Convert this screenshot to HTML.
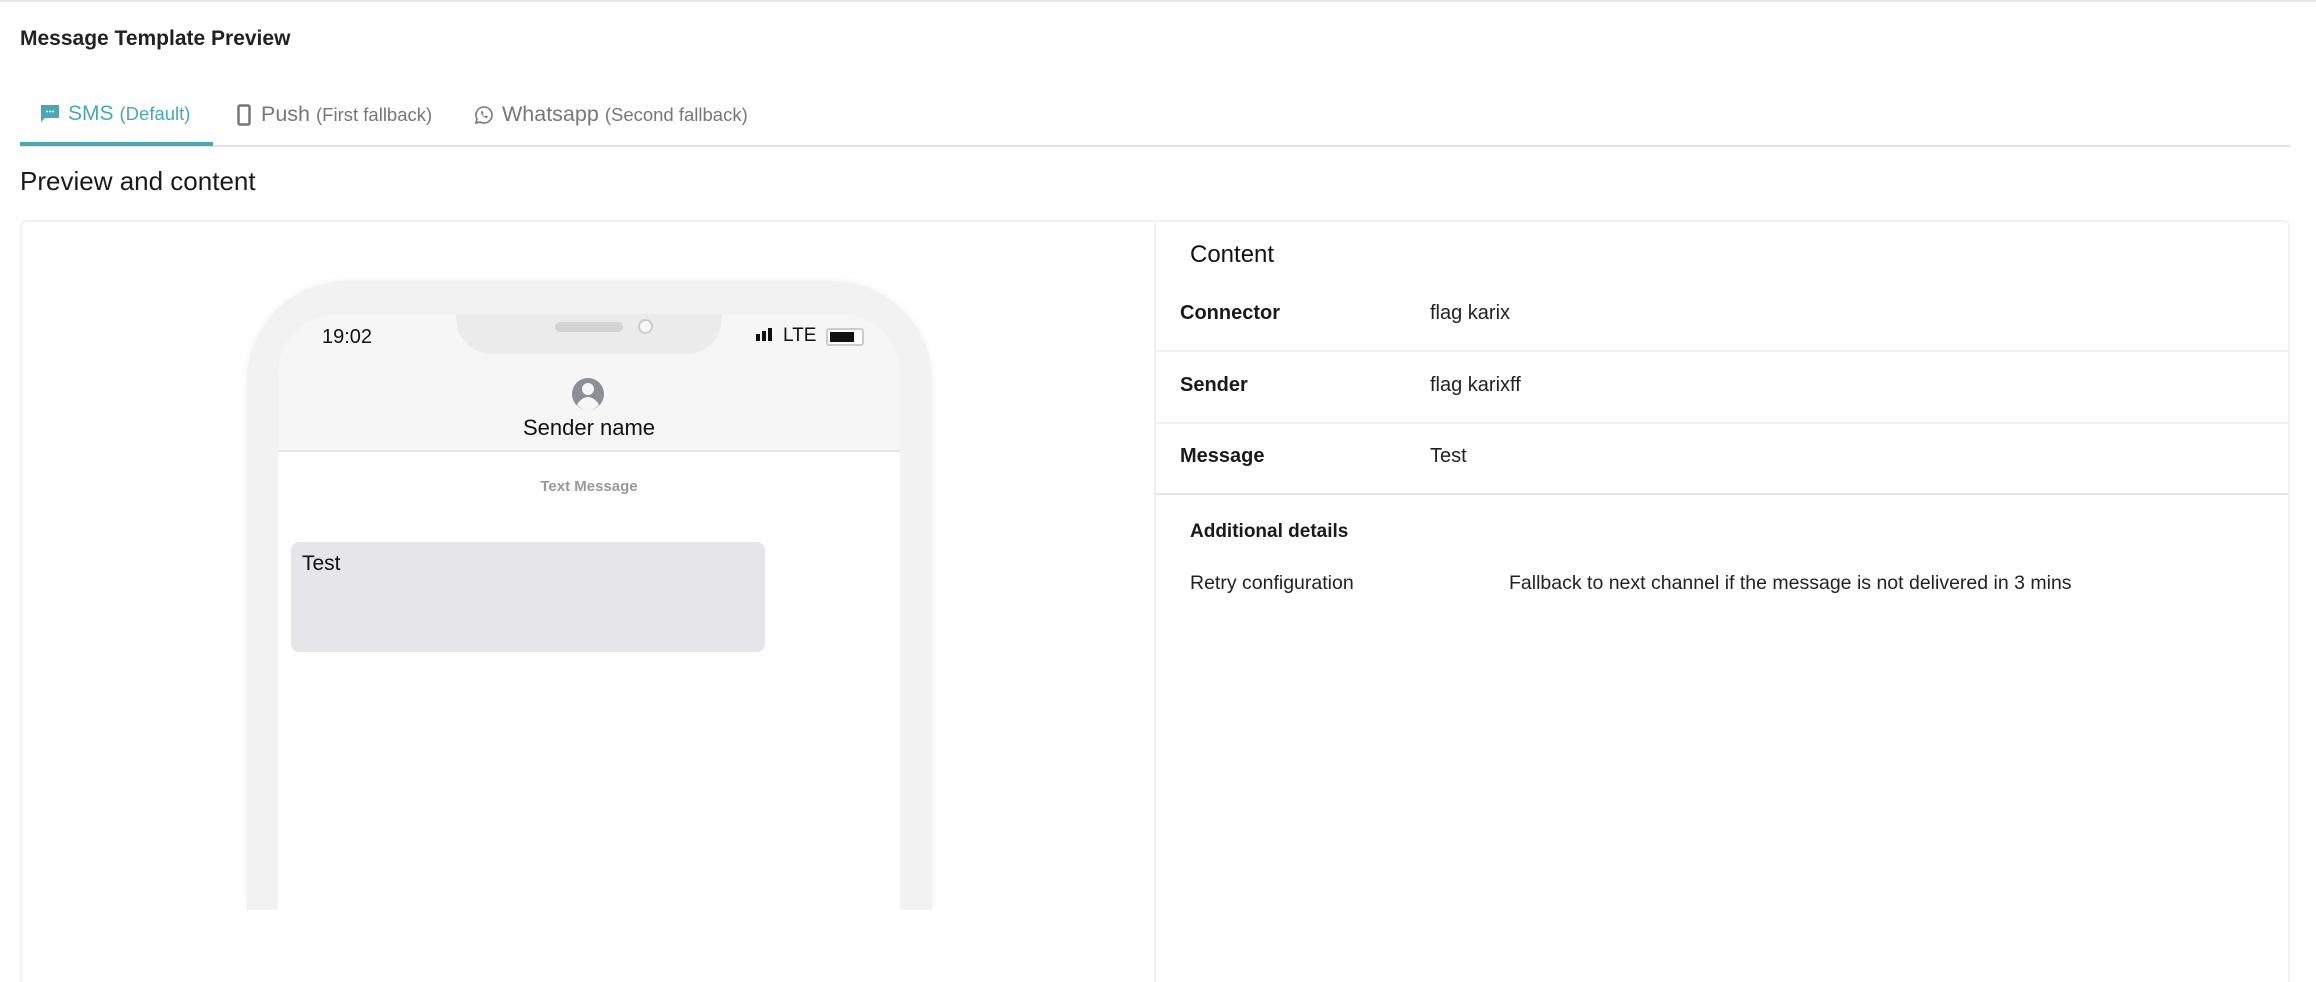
<!DOCTYPE html>
<html style="overflow:hidden;width:2316px;height:982px"><head><meta charset="utf-8"><style>
*{margin:0;padding:0;box-sizing:border-box}
body{width:2316px;height:982px;overflow:hidden;background:#fff;font-family:"Liberation Sans",sans-serif;color:#1a1a1a;position:relative;border-top:2px solid #e4e6f0}
.a{position:absolute;white-space:nowrap}
</style></head><body>
<div class="a" style="left:20px;top:25px;font-size:21px;font-weight:bold;color:#222">Message Template Preview</div>

<div class="a" style="left:40px;top:100px;font-size:21px;color:#4aa7b6;display:flex;align-items:center">
<svg width="20" height="20" viewBox="0 0 20 20" style="margin-right:8px"><path d="M1 1h18v13H5l-4 4z" fill="#4aa7b6"/><circle cx="7" cy="7.5" r="1" fill="#fff"/><circle cx="10" cy="7.5" r="1" fill="#fff"/><circle cx="13" cy="7.5" r="1" fill="#fff"/></svg>SMS <span style="font-size:18.5px;margin-left:6px">(Default)</span></div>
<div class="a" style="left:237px;top:100px;font-size:21.5px;color:#777;display:flex;align-items:center">
<svg width="14" height="22" viewBox="0 0 14 22" style="margin-right:10px"><rect x="1.5" y="1.5" width="11" height="19" rx="1.5" fill="none" stroke="#777" stroke-width="2.5"/></svg>Push <span style="font-size:18.5px;margin-left:6px">(First fallback)</span></div>
<div class="a" style="left:474px;top:100px;font-size:21.5px;color:#777;display:flex;align-items:center">
<svg width="20" height="20" viewBox="0 0 20 20" style="margin-right:8px"><path d="M10 2a8 8 0 0 1 0 16a8 8 0 0 1-4-1l-4 1 1-4a8 8 0 0 1 7-12z" fill="none" stroke="#777" stroke-width="1.6"/><path d="M7 6.5c0 3 3 6.5 6 6.5l1-1.5-2-1-1 1c-1-.5-2-1.5-2.5-2.5l1-1-1-2z" fill="#777"/></svg>Whatsapp <span style="font-size:18.5px;margin-left:6px">(Second fallback)</span></div>
<div class="a" style="left:20px;top:143px;width:2270px;height:2px;background:#e2e3ea"></div>
<div class="a" style="left:20px;top:140px;width:193px;height:4px;background:#4aa7b6"></div>

<div class="a" style="left:20px;top:164px;font-size:26px;color:#1a1a1a">Preview and content</div>

<div class="a" style="left:20px;top:218px;width:2270px;height:764px;border:2px solid #f0f1f5;border-bottom:none;border-radius:6px 6px 0 0"></div>
<div class="a" style="left:1154px;top:220px;width:2px;height:762px;background:#eef0f3"></div>

<!-- phone -->
<div class="a" style="left:247px;top:279px;width:685px;height:629px;background:#f2f2f2;border-radius:100px 100px 0 0;box-shadow:0 0 8px rgba(0,0,0,.06)"></div>
<div class="a" style="left:240px;top:908px;width:700px;height:60px;background:#fff"></div>
<div class="a" style="left:278px;top:312px;width:622px;height:596px;background:#fff;border-radius:60px 60px 0 0;overflow:hidden">
 <div style="position:absolute;left:0;top:0;width:622px;height:138px;background:#f6f6f6;border-bottom:2px solid #e6e6e6"></div>
 <div style="position:absolute;left:178px;top:0;width:266px;height:40px;background:#ebebeb;border-radius:0 0 36px 36px"></div>
 <div style="position:absolute;left:277px;top:8px;width:68px;height:10px;background:#d4d4d4;border-radius:5px"></div>
 <div style="position:absolute;left:360px;top:5px;width:15px;height:15px;border:2px solid #ccc;border-radius:50%;background:#f6f6f6"></div>
 <div style="position:absolute;left:44px;top:12px;font-size:20px;color:#111">19:02</div>
 <div style="position:absolute;left:478px;top:20px;width:4px;height:7px;background:#111"></div>
 <div style="position:absolute;left:484px;top:17px;width:4px;height:10px;background:#111"></div>
 <div style="position:absolute;left:490px;top:14px;width:4px;height:13px;background:#111"></div>
 <div style="position:absolute;left:505px;top:11px;font-size:19px;color:#111">LTE</div>
 <div style="position:absolute;left:548px;top:14px;width:38px;height:18px;border:2px solid #ccc;border-radius:3px;background:#fff"><div style="margin:2px;width:24px;height:10px;background:#111"></div></div>
 <svg style="position:absolute;left:293px;top:62px" width="34" height="36" viewBox="0 0 34 36"><circle cx="17" cy="18" r="16" fill="#8d8f98"/><circle cx="17" cy="13" r="6" fill="#f6f6f6"/><path d="M6 29c3-6 8-8 11-8s8 2 11 8c-3 3-7 5-11 5s-8-2-11-5z" fill="#f6f6f6"/></svg>
 <div style="position:absolute;left:0;width:622px;top:101px;text-align:center;font-size:22px;color:#111">Sender name</div>
 <div style="position:absolute;left:0;width:622px;top:164px;text-align:center;font-size:15px;font-weight:bold;color:#999">Text Message</div>
 <div style="position:absolute;left:13px;top:228px;width:474px;height:110px;background:#e5e5ea;border-radius:8px;padding:10px 11px;font-size:21px;color:#111">Test</div>
</div>

<!-- right -->
<div class="a" style="left:1190px;top:239px;font-size:24px;color:#111">Content</div>
<div class="a" style="left:1180px;top:300px;font-size:20px;font-weight:bold;color:#1a1a1a">Connector</div>
<div class="a" style="left:1430px;top:300px;font-size:20px;color:#222">flag karix</div>
<div class="a" style="left:1156px;top:348px;width:1132px;height:2px;background:#eef0f3"></div>
<div class="a" style="left:1180px;top:372px;font-size:20px;font-weight:bold;color:#1a1a1a">Sender</div>
<div class="a" style="left:1430px;top:372px;font-size:20px;color:#222">flag karixff</div>
<div class="a" style="left:1156px;top:420px;width:1132px;height:2px;background:#eef0f3"></div>
<div class="a" style="left:1180px;top:443px;font-size:20px;font-weight:bold;color:#1a1a1a">Message</div>
<div class="a" style="left:1430px;top:443px;font-size:20px;color:#222">Test</div>
<div class="a" style="left:1156px;top:491px;width:1132px;height:2px;background:#e4e6ee"></div>
<div class="a" style="left:1190px;top:519px;font-size:19px;font-weight:bold;color:#1a1a1a">Additional details</div>
<div class="a" style="left:1190px;top:570px;font-size:19.5px;color:#222">Retry configuration</div>
<div class="a" style="left:1509px;top:570px;font-size:19.5px;color:#222">Fallback to next channel if the message is not delivered in 3 mins</div>
</body></html>
